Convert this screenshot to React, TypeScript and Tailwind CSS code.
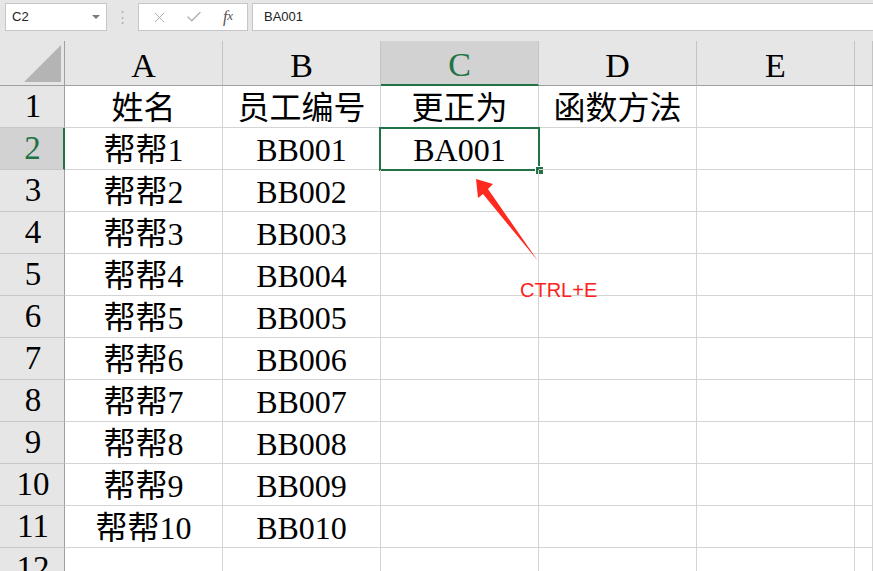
import { X, Check } from 'lucide-react';

const cols = ['A', 'B', 'C', 'D', 'E', ''];

const rows: string[][] = [
  ['姓名', '员工编号', '更正为', '函数方法', '', ''],
  ['帮帮1', 'BB001', 'BA001', '', '', ''],
  ['帮帮2', 'BB002', '', '', '', ''],
  ['帮帮3', 'BB003', '', '', '', ''],
  ['帮帮4', 'BB004', '', '', '', ''],
  ['帮帮5', 'BB005', '', '', '', ''],
  ['帮帮6', 'BB006', '', '', '', ''],
  ['帮帮7', 'BB007', '', '', '', ''],
  ['帮帮8', 'BB008', '', '', '', ''],
  ['帮帮9', 'BB009', '', '', '', ''],
  ['帮帮10', 'BB010', '', '', '', ''],
  ['', '', '', '', '', ''],
];

const serif = "font-['Liberation_Serif','Noto_Sans_CJK_SC',serif]";

function FormulaBar() {
  return (
    <div className="h-[41px] bg-[#e6e6e6] flex items-start pt-[3px] pl-[5px] font-['Liberation_Sans',sans-serif]">
      <div className="w-[102px] h-[28px] bg-white border border-[#c6c6c6] flex items-center justify-between pl-[6px] pr-[6px]">
        <span className="text-[13px] text-[#222]">C2</span>
        <span className="w-0 h-0 border-l-[4px] border-r-[4px] border-t-[4px] border-l-transparent border-r-transparent border-t-[#7a7a7a]" />
      </div>
      <div className="w-[31px] h-[28px] flex items-center justify-center text-[#b4b4b4] text-[15px]">⋮</div>
      <div className="w-[110px] h-[28px] bg-white border border-[#c6c6c6] flex items-center">
        <span className="w-[38px] flex justify-center pl-[2px]"><X size={17} strokeWidth={1.3} color="#a8a8a8" /></span>
        <span className="w-[34px] flex justify-center"><Check size={18} strokeWidth={1.8} color="#b0b0b0" /></span>
        <span className="w-[34px] flex justify-center italic text-[16px] text-[#555] font-['Liberation_Serif',serif] leading-none">
          f<span className="text-[13px]">x</span>
        </span>
      </div>
      <div className="ml-[4px] flex-1 h-[28px] bg-white border border-[#c6c6c6] border-r-0 flex items-center pl-[11px]">
        <span className="text-[13px] text-[#222]">BA001</span>
      </div>
    </div>
  );
}

export default function App() {
  return (
    <div className="w-[873px] h-[571px] overflow-hidden bg-white relative">
      <FormulaBar />
      <div className={`grid grid-cols-[65px_158px_158px_158px_158px_158px_1fr] ${serif}`}>
        {/* header row */}
        <div className="h-[45px] bg-[#e6e6e6] border-b border-r border-[#a0a0a0] flex items-end justify-end pb-[3px] pr-[3px]">
          <div className="w-0 h-0 border-l-[37px] border-b-[37px] border-l-transparent border-b-[#b4b4b4]" />
        </div>
        {cols.map((c, i) => {
          const sel = c === 'C';
          return (
            <div
              key={'h' + i}
              className={
                'h-[45px] border-r border-r-[#c4c4c4] flex items-center justify-center text-[34px] ' +
                (sel
                  ? 'bg-[#d2d2d2] text-[#217346] border-b-2 border-b-[#217346]'
                  : 'bg-[#e6e6e6] text-black border-b border-b-[#a0a0a0]')
              }
            >
              <span className="pt-[4px]">{c}</span>
            </div>
          );
        })}
        {rows.map((r, ri) => (
          <>
            <div
              key={'r' + ri}
              className={
                'h-[42px] border-b border-b-[#c8c8c8] flex items-center justify-center text-[33px] ' +
                (ri === 1
                  ? 'bg-[#d2d2d2] text-[#217346] border-r-2 border-r-[#217346]'
                  : 'bg-[#e6e6e6] text-black border-r border-r-[#a0a0a0]')
              }
            >
              <span className="pl-[2px]">{ri + 1}</span>
            </div>
            {r.map((v, ci) => (
              <div
                key={ri + '-' + ci}
                className="h-[42px] border-b border-r border-[#d4d4d4] flex items-center justify-center text-[32px] text-black relative whitespace-nowrap"
              >
                <span className="pt-[2px]">{v}</span>
                {ri === 1 && ci === 2 && (
                  <div className="absolute left-[-2px] top-[-1px] w-[161px] h-[44px] border-2 border-[#217346]">
                    <div className="absolute right-[-6px] bottom-[-6px] w-[9px] h-[9px] bg-[#217346] border border-white" />
                  </div>
                )}
              </div>
            ))}
          </>
        ))}
      </div>

      <svg className="absolute left-0 top-0" width="873" height="571" viewBox="0 0 873 571">
        <polygon points="476,179 493,184 488,189 538,261 483,194 478,198" fill="#ff2a1f" />
      </svg>
      <div className="absolute left-[520px] top-[275px] text-[20px] text-[#ff2020] font-['Liberation_Sans',sans-serif]">
        CTRL+E
      </div>
    </div>
  );
}
